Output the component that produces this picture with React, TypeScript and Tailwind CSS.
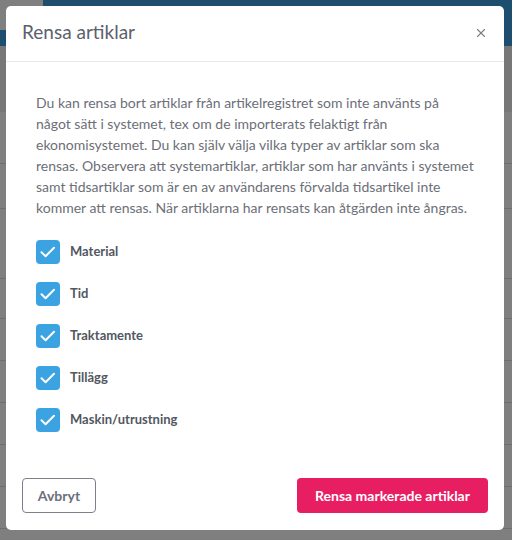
import { X } from 'lucide-react'

const options = ['Material', 'Tid', 'Traktamente', 'Tillägg', 'Maskin/utrustning']

// bakgrundsrader i sidan bakom modalen
const rows = [52, 45, 70, 40, 42, 42, 42, 42, 42]

function Check() {
  return (
    <span className="flex h-6 w-6 shrink-0 items-center justify-center rounded-[4px] bg-[#3ba3e1]">
      <svg width="24" height="24" viewBox="0 0 24 24" fill="none">
        <path
          d="M5.5 12.2 9.6 16.2 18 7.8"
          stroke="white"
          strokeWidth="2"
          strokeLinecap="round"
          strokeLinejoin="round"
        />
      </svg>
    </span>
  )
}

export default function App() {
  return (
    <div className="relative h-[540px] w-[512px] overflow-hidden bg-[#7f7f7f] font-['Lato',sans-serif]">
      {/* sidan bakom */}
      <div className="flex h-[46px] bg-[#1d4e6d]">
        <div className="h-[30px] w-[43px] bg-[#7f7f7f]" />
      </div>
      <div className="h-[66px] bg-[#777777]" />
      <div className="flex flex-col">
        {rows.map((h, i) => (
          <div key={i} className="border-b border-[#6e6e6e]" style={{ height: h }} />
        ))}
      </div>

      {/* modal */}
      <div className="absolute left-[6px] top-[6px] flex h-[524px] w-[498px] flex-col rounded-[5px] bg-white">
        <div className="flex h-[56px] items-start justify-between border-b border-[#e8e8e8] pl-4 pr-[16px] pt-[14px]">
          <h2 className="text-[19px] leading-[24px] text-[#5b616c]">Rensa artiklar</h2>
          <X className="mt-[6px] h-[14px] w-[14px] text-[#7d8087]" strokeWidth={2} />
        </div>

        <div className="px-[30px] pt-[30px]">
          <p className="text-[14px] leading-[21px] text-[#6c6f77]">
            Du kan rensa bort artiklar från artikelregistret som inte använts på något sätt i
            systemet, tex om de importerats felaktigt från ekonomisystemet. Du kan själv välja
            vilka typer av artiklar som ska rensas. Observera att systemartiklar, artiklar som har
            använts i systemet samt tidsartiklar som är en av användarens förvalda tidsartikel
            inte kommer att rensas. När artiklarna har rensats kan åtgärden inte ångras.
          </p>

          <div className="mt-[22px] flex flex-col gap-[18px]">
            {options.map((o) => (
              <label key={o} className="flex items-center gap-[10px]">
                <Check />
                <span className="text-[13px] font-bold text-[#525761]">{o}</span>
              </label>
            ))}
          </div>
        </div>

        <div className="mt-auto flex items-center justify-between px-4 pb-[17px]">
          <button className="h-[35px] w-[74px] rounded-[4px] border border-[#7b8089] text-[14px] font-bold text-[#6b707a]">
            Avbryt
          </button>
          <button className="h-[35px] w-[191px] rounded-[4px] bg-[#e81e63] text-[14px] font-bold text-white">
            Rensa markerade artiklar
          </button>
        </div>
      </div>
    </div>
  )
}
